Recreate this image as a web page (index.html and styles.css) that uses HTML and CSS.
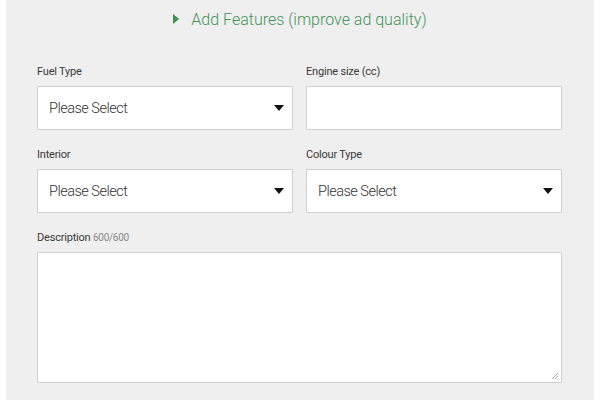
FILE: index.html
```html
<!DOCTYPE html>
<html>
<head>
<meta charset="utf-8">
<link rel="stylesheet" href="styles.css">
</head>
<body>
<div class="panel">
  <div class="heading">
    <svg class="caret-right" width="6" height="10" viewBox="0 0 6 10"><path d="M0 0 L6 5 L0 10 Z" fill="#3f8f53"/></svg>
    <span>Add Features (improve ad quality)</span>
  </div>
  <div class="grid">
    <div class="field">
      <label class="label">Fuel Type</label>
      <div class="box select"><span>Please Select</span><span class="arrow"></span></div>
    </div>
    <div class="field">
      <label class="label">Engine size (cc)</label>
      <div class="box"></div>
    </div>
    <div class="field">
      <label class="label">Interior</label>
      <div class="box select"><span>Please Select</span><span class="arrow"></span></div>
    </div>
    <div class="field">
      <label class="label">Colour Type</label>
      <div class="box select"><span>Please Select</span><span class="arrow"></span></div>
    </div>
    <div class="field wide">
      <label class="label">Description <span class="count">600/600</span></label>
      <div class="box textarea">
        <svg class="grip" width="8" height="8" viewBox="0 0 8 8"><path d="M7 1 L1 7 M7 4 L4 7" stroke="#aaa" stroke-width="1"/></svg>
      </div>
    </div>
  </div>
</div>
</body>
</html>
```
FILE: styles.css
```css
html, body {
  margin: 0;
  padding: 0;
  background: #ffffff;
}
body {
  font-family: Roboto, "Liberation Sans", sans-serif;
  width: 600px;
  height: 400px;
  overflow: hidden;
}
.panel {
  margin: 0 6px;
  height: 400px;
  background: #efefef;
  padding: 0 31px;
  box-sizing: border-box;
}
.heading {
  display: flex;
  align-items: center;
  justify-content: center;
  gap: 12px;
  height: 38px;
  color: #45935a;
  font-family: Roboto, sans-serif;
  font-size: 16px;
  font-weight: 300;
}
.grid {
  display: grid;
  grid-template-columns: 256px 256px;
  column-gap: 13px;
  row-gap: 17px;
  margin-top: 26px;
}
.field {
  display: flex;
  flex-direction: column;
}
.field.wide {
  grid-column: 1 / span 2;
}
.label {
  font-size: 11px;
  font-weight: 400;
  color: #3a3a3a;
  height: 16px;
  line-height: 16px;
  margin-bottom: 6px;
  letter-spacing: -0.2px;
}
.count {
  color: #888;
  font-size: 10px;
  letter-spacing: -0.3px;
}
.box {
  height: 44px;
  box-sizing: border-box;
  background: #fff;
  border: 1px solid #cfcfcf;
  border-radius: 1px;
}
.select {
  display: flex;
  align-items: center;
  justify-content: space-between;
  padding: 0 8px 0 11px;
  font-size: 14.5px;
  font-weight: 300;
  color: #333;
  letter-spacing: -0.5px;
}
.arrow {
  width: 0;
  height: 0;
  border-left: 5px solid transparent;
  border-right: 5px solid transparent;
  border-top: 6px solid #111;
}
.textarea {
  height: 131px;
  position: relative;
}
.grip {
  position: absolute;
  right: 2px;
  bottom: 2px;
}
```
